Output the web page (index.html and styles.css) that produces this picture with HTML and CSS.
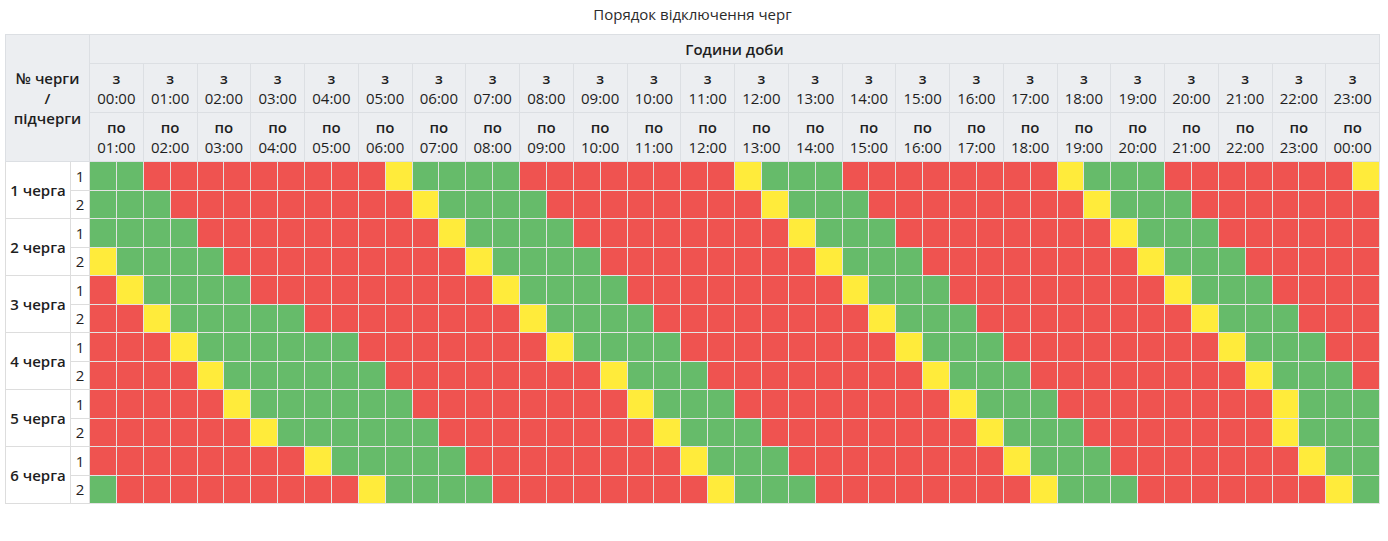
FILE: index.html
```html
<!DOCTYPE html>
<html lang="uk">
<head>
<meta charset="utf-8">
<title>Порядок відключення черг</title>
<link rel="stylesheet" href="styles.css">
</head>
<body>
<div class="page">
  <h1 class="title">Порядок відключення черг</h1>
  <table class="grid">
    <colgroup>
      <col class="c-name"><col class="c-sub">
      <col><col><col><col><col><col><col><col><col><col><col><col>
      <col><col><col><col><col><col><col><col><col><col><col><col>
      <col><col><col><col><col><col><col><col><col><col><col><col>
      <col><col><col><col><col><col><col><col><col><col><col><col>
    </colgroup>
    <thead>
      <tr class="h1">
        <th class="corner" colspan="2" rowspan="3">№ черги<br>/<br>підчерги</th>
        <th class="hours" colspan="48">Години доби</th>
      </tr>
      <tr class="h2">
        <th colspan="2"><b>з</b><br>00:00</th><th colspan="2"><b>з</b><br>01:00</th><th colspan="2"><b>з</b><br>02:00</th><th colspan="2"><b>з</b><br>03:00</th>
        <th colspan="2"><b>з</b><br>04:00</th><th colspan="2"><b>з</b><br>05:00</th><th colspan="2"><b>з</b><br>06:00</th><th colspan="2"><b>з</b><br>07:00</th>
        <th colspan="2"><b>з</b><br>08:00</th><th colspan="2"><b>з</b><br>09:00</th><th colspan="2"><b>з</b><br>10:00</th><th colspan="2"><b>з</b><br>11:00</th>
        <th colspan="2"><b>з</b><br>12:00</th><th colspan="2"><b>з</b><br>13:00</th><th colspan="2"><b>з</b><br>14:00</th><th colspan="2"><b>з</b><br>15:00</th>
        <th colspan="2"><b>з</b><br>16:00</th><th colspan="2"><b>з</b><br>17:00</th><th colspan="2"><b>з</b><br>18:00</th><th colspan="2"><b>з</b><br>19:00</th>
        <th colspan="2"><b>з</b><br>20:00</th><th colspan="2"><b>з</b><br>21:00</th><th colspan="2"><b>з</b><br>22:00</th><th colspan="2"><b>з</b><br>23:00</th>
      </tr>
      <tr class="h2">
        <th colspan="2"><b>по</b><br>01:00</th><th colspan="2"><b>по</b><br>02:00</th><th colspan="2"><b>по</b><br>03:00</th><th colspan="2"><b>по</b><br>04:00</th>
        <th colspan="2"><b>по</b><br>05:00</th><th colspan="2"><b>по</b><br>06:00</th><th colspan="2"><b>по</b><br>07:00</th><th colspan="2"><b>по</b><br>08:00</th>
        <th colspan="2"><b>по</b><br>09:00</th><th colspan="2"><b>по</b><br>10:00</th><th colspan="2"><b>по</b><br>11:00</th><th colspan="2"><b>по</b><br>12:00</th>
        <th colspan="2"><b>по</b><br>13:00</th><th colspan="2"><b>по</b><br>14:00</th><th colspan="2"><b>по</b><br>15:00</th><th colspan="2"><b>по</b><br>16:00</th>
        <th colspan="2"><b>по</b><br>17:00</th><th colspan="2"><b>по</b><br>18:00</th><th colspan="2"><b>по</b><br>19:00</th><th colspan="2"><b>по</b><br>20:00</th>
        <th colspan="2"><b>по</b><br>21:00</th><th colspan="2"><b>по</b><br>22:00</th><th colspan="2"><b>по</b><br>23:00</th><th colspan="2"><b>по</b><br>00:00</th>
      </tr>
    </thead>
    <tbody>
      <tr>
        <td class="queue" rowspan="2">1 черга</td><td class="sub">1</td>
        <td class="g"></td><td class="g"></td>
        <td class="r"></td><td class="r"></td><td class="r"></td><td class="r"></td><td class="r"></td><td class="r"></td><td class="r"></td><td class="r"></td><td class="r"></td>
        <td class="y"></td>
        <td class="g"></td><td class="g"></td><td class="g"></td><td class="g"></td>
        <td class="r"></td><td class="r"></td><td class="r"></td><td class="r"></td><td class="r"></td><td class="r"></td><td class="r"></td><td class="r"></td>
        <td class="y"></td>
        <td class="g"></td><td class="g"></td><td class="g"></td>
        <td class="r"></td><td class="r"></td><td class="r"></td><td class="r"></td><td class="r"></td><td class="r"></td><td class="r"></td><td class="r"></td>
        <td class="y"></td>
        <td class="g"></td><td class="g"></td><td class="g"></td>
        <td class="r"></td><td class="r"></td><td class="r"></td><td class="r"></td><td class="r"></td><td class="r"></td><td class="r"></td>
        <td class="y"></td>
      </tr>
      <tr>
        <td class="sub">2</td>
        <td class="g"></td><td class="g"></td><td class="g"></td>
        <td class="r"></td><td class="r"></td><td class="r"></td><td class="r"></td><td class="r"></td><td class="r"></td><td class="r"></td><td class="r"></td><td class="r"></td>
        <td class="y"></td>
        <td class="g"></td><td class="g"></td><td class="g"></td><td class="g"></td>
        <td class="r"></td><td class="r"></td><td class="r"></td><td class="r"></td><td class="r"></td><td class="r"></td><td class="r"></td><td class="r"></td>
        <td class="y"></td>
        <td class="g"></td><td class="g"></td><td class="g"></td>
        <td class="r"></td><td class="r"></td><td class="r"></td><td class="r"></td><td class="r"></td><td class="r"></td><td class="r"></td><td class="r"></td>
        <td class="y"></td>
        <td class="g"></td><td class="g"></td><td class="g"></td>
        <td class="r"></td><td class="r"></td><td class="r"></td><td class="r"></td><td class="r"></td><td class="r"></td><td class="r"></td>
      </tr>
      <tr>
        <td class="queue" rowspan="2">2 черга</td><td class="sub">1</td>
        <td class="g"></td><td class="g"></td><td class="g"></td><td class="g"></td>
        <td class="r"></td><td class="r"></td><td class="r"></td><td class="r"></td><td class="r"></td><td class="r"></td><td class="r"></td><td class="r"></td><td class="r"></td>
        <td class="y"></td>
        <td class="g"></td><td class="g"></td><td class="g"></td><td class="g"></td>
        <td class="r"></td><td class="r"></td><td class="r"></td><td class="r"></td><td class="r"></td><td class="r"></td><td class="r"></td><td class="r"></td>
        <td class="y"></td>
        <td class="g"></td><td class="g"></td><td class="g"></td>
        <td class="r"></td><td class="r"></td><td class="r"></td><td class="r"></td><td class="r"></td><td class="r"></td><td class="r"></td><td class="r"></td>
        <td class="y"></td>
        <td class="g"></td><td class="g"></td><td class="g"></td>
        <td class="r"></td><td class="r"></td><td class="r"></td><td class="r"></td><td class="r"></td><td class="r"></td>
      </tr>
      <tr>
        <td class="sub">2</td>
        <td class="y"></td>
        <td class="g"></td><td class="g"></td><td class="g"></td><td class="g"></td>
        <td class="r"></td><td class="r"></td><td class="r"></td><td class="r"></td><td class="r"></td><td class="r"></td><td class="r"></td><td class="r"></td><td class="r"></td>
        <td class="y"></td>
        <td class="g"></td><td class="g"></td><td class="g"></td><td class="g"></td>
        <td class="r"></td><td class="r"></td><td class="r"></td><td class="r"></td><td class="r"></td><td class="r"></td><td class="r"></td><td class="r"></td>
        <td class="y"></td>
        <td class="g"></td><td class="g"></td><td class="g"></td>
        <td class="r"></td><td class="r"></td><td class="r"></td><td class="r"></td><td class="r"></td><td class="r"></td><td class="r"></td><td class="r"></td>
        <td class="y"></td>
        <td class="g"></td><td class="g"></td><td class="g"></td>
        <td class="r"></td><td class="r"></td><td class="r"></td><td class="r"></td><td class="r"></td>
      </tr>
      <tr>
        <td class="queue" rowspan="2">3 черга</td><td class="sub">1</td>
        <td class="r"></td>
        <td class="y"></td>
        <td class="g"></td><td class="g"></td><td class="g"></td><td class="g"></td>
        <td class="r"></td><td class="r"></td><td class="r"></td><td class="r"></td><td class="r"></td><td class="r"></td><td class="r"></td><td class="r"></td><td class="r"></td>
        <td class="y"></td>
        <td class="g"></td><td class="g"></td><td class="g"></td><td class="g"></td>
        <td class="r"></td><td class="r"></td><td class="r"></td><td class="r"></td><td class="r"></td><td class="r"></td><td class="r"></td><td class="r"></td>
        <td class="y"></td>
        <td class="g"></td><td class="g"></td><td class="g"></td>
        <td class="r"></td><td class="r"></td><td class="r"></td><td class="r"></td><td class="r"></td><td class="r"></td><td class="r"></td><td class="r"></td>
        <td class="y"></td>
        <td class="g"></td><td class="g"></td><td class="g"></td>
        <td class="r"></td><td class="r"></td><td class="r"></td><td class="r"></td>
      </tr>
      <tr>
        <td class="sub">2</td>
        <td class="r"></td><td class="r"></td>
        <td class="y"></td>
        <td class="g"></td><td class="g"></td><td class="g"></td><td class="g"></td><td class="g"></td>
        <td class="r"></td><td class="r"></td><td class="r"></td><td class="r"></td><td class="r"></td><td class="r"></td><td class="r"></td><td class="r"></td>
        <td class="y"></td>
        <td class="g"></td><td class="g"></td><td class="g"></td><td class="g"></td>
        <td class="r"></td><td class="r"></td><td class="r"></td><td class="r"></td><td class="r"></td><td class="r"></td><td class="r"></td><td class="r"></td>
        <td class="y"></td>
        <td class="g"></td><td class="g"></td><td class="g"></td>
        <td class="r"></td><td class="r"></td><td class="r"></td><td class="r"></td><td class="r"></td><td class="r"></td><td class="r"></td><td class="r"></td>
        <td class="y"></td>
        <td class="g"></td><td class="g"></td><td class="g"></td>
        <td class="r"></td><td class="r"></td><td class="r"></td>
      </tr>
      <tr>
        <td class="queue" rowspan="2">4 черга</td><td class="sub">1</td>
        <td class="r"></td><td class="r"></td><td class="r"></td>
        <td class="y"></td>
        <td class="g"></td><td class="g"></td><td class="g"></td><td class="g"></td><td class="g"></td><td class="g"></td>
        <td class="r"></td><td class="r"></td><td class="r"></td><td class="r"></td><td class="r"></td><td class="r"></td><td class="r"></td>
        <td class="y"></td>
        <td class="g"></td><td class="g"></td><td class="g"></td><td class="g"></td>
        <td class="r"></td><td class="r"></td><td class="r"></td><td class="r"></td><td class="r"></td><td class="r"></td><td class="r"></td><td class="r"></td>
        <td class="y"></td>
        <td class="g"></td><td class="g"></td><td class="g"></td>
        <td class="r"></td><td class="r"></td><td class="r"></td><td class="r"></td><td class="r"></td><td class="r"></td><td class="r"></td><td class="r"></td>
        <td class="y"></td>
        <td class="g"></td><td class="g"></td><td class="g"></td>
        <td class="r"></td><td class="r"></td>
      </tr>
      <tr>
        <td class="sub">2</td>
        <td class="r"></td><td class="r"></td><td class="r"></td><td class="r"></td>
        <td class="y"></td>
        <td class="g"></td><td class="g"></td><td class="g"></td><td class="g"></td><td class="g"></td><td class="g"></td>
        <td class="r"></td><td class="r"></td><td class="r"></td><td class="r"></td><td class="r"></td><td class="r"></td><td class="r"></td><td class="r"></td>
        <td class="y"></td>
        <td class="g"></td><td class="g"></td><td class="g"></td>
        <td class="r"></td><td class="r"></td><td class="r"></td><td class="r"></td><td class="r"></td><td class="r"></td><td class="r"></td><td class="r"></td>
        <td class="y"></td>
        <td class="g"></td><td class="g"></td><td class="g"></td>
        <td class="r"></td><td class="r"></td><td class="r"></td><td class="r"></td><td class="r"></td><td class="r"></td><td class="r"></td><td class="r"></td>
        <td class="y"></td>
        <td class="g"></td><td class="g"></td><td class="g"></td>
        <td class="r"></td>
      </tr>
      <tr>
        <td class="queue" rowspan="2">5 черга</td><td class="sub">1</td>
        <td class="r"></td><td class="r"></td><td class="r"></td><td class="r"></td><td class="r"></td>
        <td class="y"></td>
        <td class="g"></td><td class="g"></td><td class="g"></td><td class="g"></td><td class="g"></td><td class="g"></td>
        <td class="r"></td><td class="r"></td><td class="r"></td><td class="r"></td><td class="r"></td><td class="r"></td><td class="r"></td><td class="r"></td>
        <td class="y"></td>
        <td class="g"></td><td class="g"></td><td class="g"></td>
        <td class="r"></td><td class="r"></td><td class="r"></td><td class="r"></td><td class="r"></td><td class="r"></td><td class="r"></td><td class="r"></td>
        <td class="y"></td>
        <td class="g"></td><td class="g"></td><td class="g"></td>
        <td class="r"></td><td class="r"></td><td class="r"></td><td class="r"></td><td class="r"></td><td class="r"></td><td class="r"></td><td class="r"></td>
        <td class="y"></td>
        <td class="g"></td><td class="g"></td><td class="g"></td>
      </tr>
      <tr>
        <td class="sub">2</td>
        <td class="r"></td><td class="r"></td><td class="r"></td><td class="r"></td><td class="r"></td><td class="r"></td>
        <td class="y"></td>
        <td class="g"></td><td class="g"></td><td class="g"></td><td class="g"></td><td class="g"></td><td class="g"></td>
        <td class="r"></td><td class="r"></td><td class="r"></td><td class="r"></td><td class="r"></td><td class="r"></td><td class="r"></td><td class="r"></td>
        <td class="y"></td>
        <td class="g"></td><td class="g"></td><td class="g"></td>
        <td class="r"></td><td class="r"></td><td class="r"></td><td class="r"></td><td class="r"></td><td class="r"></td><td class="r"></td><td class="r"></td>
        <td class="y"></td>
        <td class="g"></td><td class="g"></td><td class="g"></td>
        <td class="r"></td><td class="r"></td><td class="r"></td><td class="r"></td><td class="r"></td><td class="r"></td><td class="r"></td>
        <td class="y"></td>
        <td class="g"></td><td class="g"></td><td class="g"></td>
      </tr>
      <tr>
        <td class="queue" rowspan="2">6 черга</td><td class="sub">1</td>
        <td class="r"></td><td class="r"></td><td class="r"></td><td class="r"></td><td class="r"></td><td class="r"></td><td class="r"></td><td class="r"></td>
        <td class="y"></td>
        <td class="g"></td><td class="g"></td><td class="g"></td><td class="g"></td><td class="g"></td>
        <td class="r"></td><td class="r"></td><td class="r"></td><td class="r"></td><td class="r"></td><td class="r"></td><td class="r"></td><td class="r"></td>
        <td class="y"></td>
        <td class="g"></td><td class="g"></td><td class="g"></td>
        <td class="r"></td><td class="r"></td><td class="r"></td><td class="r"></td><td class="r"></td><td class="r"></td><td class="r"></td><td class="r"></td>
        <td class="y"></td>
        <td class="g"></td><td class="g"></td><td class="g"></td>
        <td class="r"></td><td class="r"></td><td class="r"></td><td class="r"></td><td class="r"></td><td class="r"></td><td class="r"></td>
        <td class="y"></td>
        <td class="g"></td><td class="g"></td>
      </tr>
      <tr>
        <td class="sub">2</td>
        <td class="g"></td>
        <td class="r"></td><td class="r"></td><td class="r"></td><td class="r"></td><td class="r"></td><td class="r"></td><td class="r"></td><td class="r"></td><td class="r"></td>
        <td class="y"></td>
        <td class="g"></td><td class="g"></td><td class="g"></td><td class="g"></td>
        <td class="r"></td><td class="r"></td><td class="r"></td><td class="r"></td><td class="r"></td><td class="r"></td><td class="r"></td><td class="r"></td>
        <td class="y"></td>
        <td class="g"></td><td class="g"></td><td class="g"></td>
        <td class="r"></td><td class="r"></td><td class="r"></td><td class="r"></td><td class="r"></td><td class="r"></td><td class="r"></td><td class="r"></td>
        <td class="y"></td>
        <td class="g"></td><td class="g"></td><td class="g"></td>
        <td class="r"></td><td class="r"></td><td class="r"></td><td class="r"></td><td class="r"></td><td class="r"></td><td class="r"></td>
        <td class="y"></td>
        <td class="g"></td>
      </tr>
    </tbody>
  </table>
</div>
</body>
</html>
```

FILE: styles.css
```css
html, body {
  margin: 0;
  padding: 0;
  background: #ffffff;
}

body {
  font-family: "Open Sans", "Noto Sans", sans-serif;
  color: #222222;
}

.page {
  padding: 4px 8px 0 5px;
}

.title {
  margin: 0 0 10px 0;
  font-size: 15px;
  line-height: 20px;
  font-weight: 400;
  text-align: center;
  color: #2b2b2b;
}

.grid {
  width: 100%;
  table-layout: fixed;
  border-collapse: collapse;
  font-size: 15px;
}

.c-name { width: 65px; }
.c-sub { width: 19px; }

.grid th {
  background: #eceef1;
  border: 1px solid #dcdfe3;
  font-weight: 400;
  text-align: center;
  vertical-align: middle;
  line-height: 20px;
  padding: 4px 0;
  white-space: nowrap;
  color: #1e1e1e;
}

.grid th b,
.grid th.corner,
.grid th.hours {
  font-weight: 600;
}

.grid tr.h1 th.hours {
  height: 20px;
}

.grid td {
  border: 1px solid #e3e3e3;
  height: 27.5px;
  padding: 0;
}

.grid td.queue {
  background: #ffffff;
  font-weight: 600;
  text-align: center;
  white-space: nowrap;
  border-color: #dddddd;
  color: #1e1e1e;
}

.grid td.sub {
  background: #ffffff;
  text-align: center;
  border-color: #dddddd;
  color: #1e1e1e;
}

.grid td.g { background: #66bb6a; }
.grid td.r { background: #ef5350; }
.grid td.y { background: #ffeb3b; }
```
